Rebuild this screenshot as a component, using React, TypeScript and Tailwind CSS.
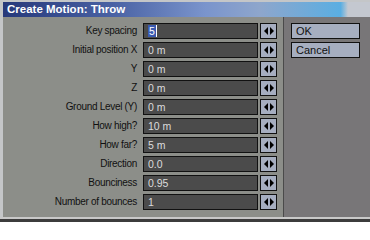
const rows: { label: string; value: string }[] = [
  { label: "Key spacing", value: "5" },
  { label: "Initial position X", value: "0 m" },
  { label: "Y", value: "0 m" },
  { label: "Z", value: "0 m" },
  { label: "Ground Level (Y)", value: "0 m" },
  { label: "How high?", value: "10 m" },
  { label: "How far?", value: "5 m" },
  { label: "Direction", value: "0.0" },
  { label: "Bounciness", value: "0.95" },
  { label: "Number of bounces", value: "1" },
];

function Arrows() {
  return (
    <svg width="10" height="8" viewBox="0 0 10 8">
      <polygon points="0,4 4,0 4,8" fill="#000" />
      <polygon points="6,0 10,4 6,8" fill="#000" />
    </svg>
  );
}

export default function App() {
  return (
    <div
      className="w-[370px] h-[222px] bg-[#c4c6c8] flex flex-col overflow-hidden text-[10px] leading-none"
      style={{ fontFamily: '"Liberation Sans", Arial, sans-serif' }}
    >
      {/* TITLE */}
      <div className="mt-[2px] ml-[3px] h-[15px] flex items-center px-[4px] bg-[linear-gradient(90deg,#26387a_0%,#4a62a4_30%,#7a94cc_55%,#8ea6cc_70%,#5aaee2_92%,#c4c8d0_94%)]">
        <span className="text-white font-bold text-[11.5px]">Create Motion: Throw</span>
      </div>

      {/* BODY */}
      <div className="flex h-[200px] ml-[3px]">
        {/* LEFT */}
        <div className="w-[281px] bg-[#8c8e89] border-r border-[#4a4a4a] pt-[6px] flex flex-col gap-[3px]">
          {rows.map((r, i) => (
            <div key={r.label} className="flex items-center h-[16px]">
              <div className="w-[135px] text-right text-[#111] pr-[1px] tracking-[-0.3px]">
                {r.label}
              </div>
              <div className="ml-[5px] w-[115px] h-[16px] bg-[#4b4b4b] border border-[#111] flex items-center pl-[4px] text-[#dcdcdc] text-[10.5px]">
                {i === 0 ? (
                  <span className="bg-[#3a5ab0] text-white px-[1px] h-[12px] flex items-center border-r border-white">
                    {r.value}
                  </span>
                ) : (
                  r.value
                )}
              </div>
              <div className="ml-[2px] w-[17px] h-[16px] bg-[#a6aec0] border border-[#111] flex items-center justify-center">
                <Arrows />
              </div>
            </div>
          ))}
        </div>

        {/* RIGHT */}
        <div className="flex-1 bg-[#787678] pt-[6px] pl-[7px] flex flex-col gap-[3px]">
          <button className="w-[69px] h-[16px] bg-[#a6aec0] border border-[#111] text-left pl-[4px] text-[#111] text-[11px]">
            OK
          </button>
          <button className="w-[69px] h-[16px] bg-[#a6aec0] border border-[#111] text-left pl-[4px] text-[#111] text-[11px]">
            Cancel
          </button>
        </div>
      </div>

      {/* BOTTOM */}
      <div className="h-[2px] bg-[#c8c8c8]" />
      <div className="flex-1 bg-[#3c3c3c]" />
    </div>
  );
}
